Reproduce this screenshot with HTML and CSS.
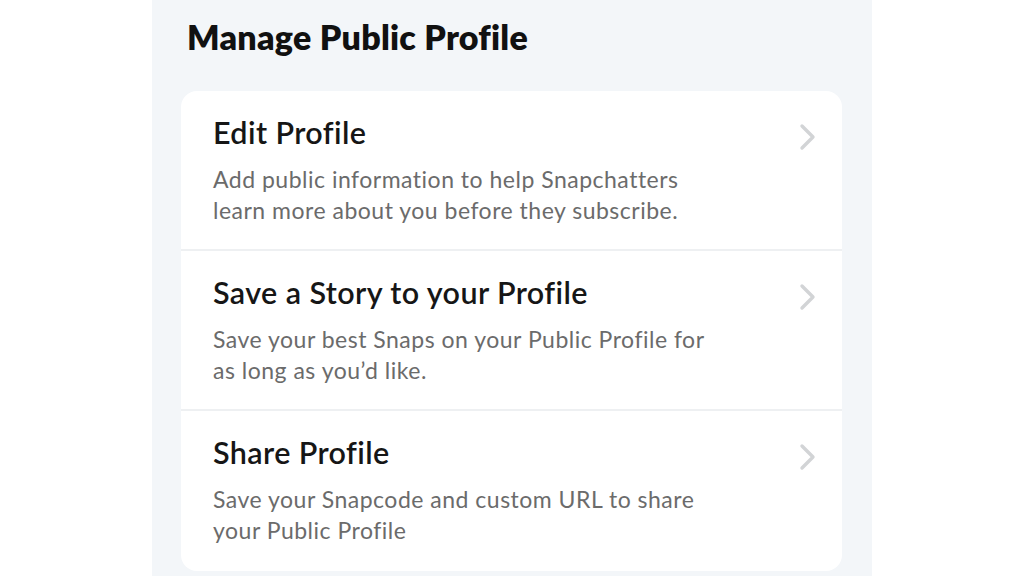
FILE: index.html
```html
<!DOCTYPE html>
<html>
<head>
<meta charset="utf-8">
<link rel="stylesheet" href="styles.css">
</head>
<body>
<div class="page">
  <div class="panel">
    <h1 class="heading">Manage Public Profile</h1>
    <div class="card">
      <div class="row">
        <div class="text">
          <div class="title">Edit Profile</div>
          <div class="desc">Add public information to help Snapchatters<br>learn more about you before they subscribe.</div>
        </div>
        <svg class="chev" width="20" height="30" viewBox="0 0 20 30"><path d="M4 3 L15 14 L4 25" fill="none" stroke="#d2d4d6" stroke-width="3.4" stroke-linecap="round" stroke-linejoin="round"/></svg>
      </div>
      <div class="row">
        <div class="text">
          <div class="title">Save a Story to your Profile</div>
          <div class="desc">Save your best Snaps on your Public Profile for<br>as long as you’d like.</div>
        </div>
        <svg class="chev" width="20" height="30" viewBox="0 0 20 30"><path d="M4 3 L15 14 L4 25" fill="none" stroke="#d2d4d6" stroke-width="3.4" stroke-linecap="round" stroke-linejoin="round"/></svg>
      </div>
      <div class="row">
        <div class="text">
          <div class="title">Share Profile</div>
          <div class="desc">Save your Snapcode and custom URL to share<br>your Public Profile</div>
        </div>
        <svg class="chev" width="20" height="30" viewBox="0 0 20 30"><path d="M4 3 L15 14 L4 25" fill="none" stroke="#d2d4d6" stroke-width="3.4" stroke-linecap="round" stroke-linejoin="round"/></svg>
      </div>
    </div>
  </div>
</div>
</body>
</html>
```
FILE: styles.css
```css
html, body {
  margin: 0;
  padding: 0;
  background: #ffffff;
}
body {
  font-family: Lato, "Noto Sans", sans-serif;
  width: 1024px;
  height: 576px;
  overflow: hidden;
}
.page {
  display: flex;
  justify-content: flex-start;
  padding-left: 152px;
}
.panel {
  width: 720px;
  height: 576px;
  background: #f3f6f9;
  padding: 0 30px 0 29px;
  box-sizing: border-box;
}
.heading {
  margin: 0;
  padding: 16px 0 0 6px;
  height: 74px;
  box-sizing: border-box;
  font-size: 34px;
  font-weight: 800;
  color: #111111;
  letter-spacing: 0.25px;
}
.card {
  margin-top: 17px;
  background: #ffffff;
  border-radius: 16px;
  overflow: hidden;
}
.row {
  display: flex;
  align-items: flex-start;
  justify-content: space-between;
  height: 160px;
  box-sizing: border-box;
  padding: 22px 24px 0 32px;
  border-bottom: 2px solid #eef0f2;
}
.row:last-child {
  border-bottom: none;
}
.title {
  font-size: 30.5px;
  font-weight: 600;
  color: #161616;
  line-height: 38px;
  letter-spacing: 0.4px;
}
.desc {
  margin-top: 13px;
  font-size: 23px;
  line-height: 31px;
  color: #6b6b6b;
  letter-spacing: 0.5px;
}
.chev {
  margin-top: 10px;
}
```
